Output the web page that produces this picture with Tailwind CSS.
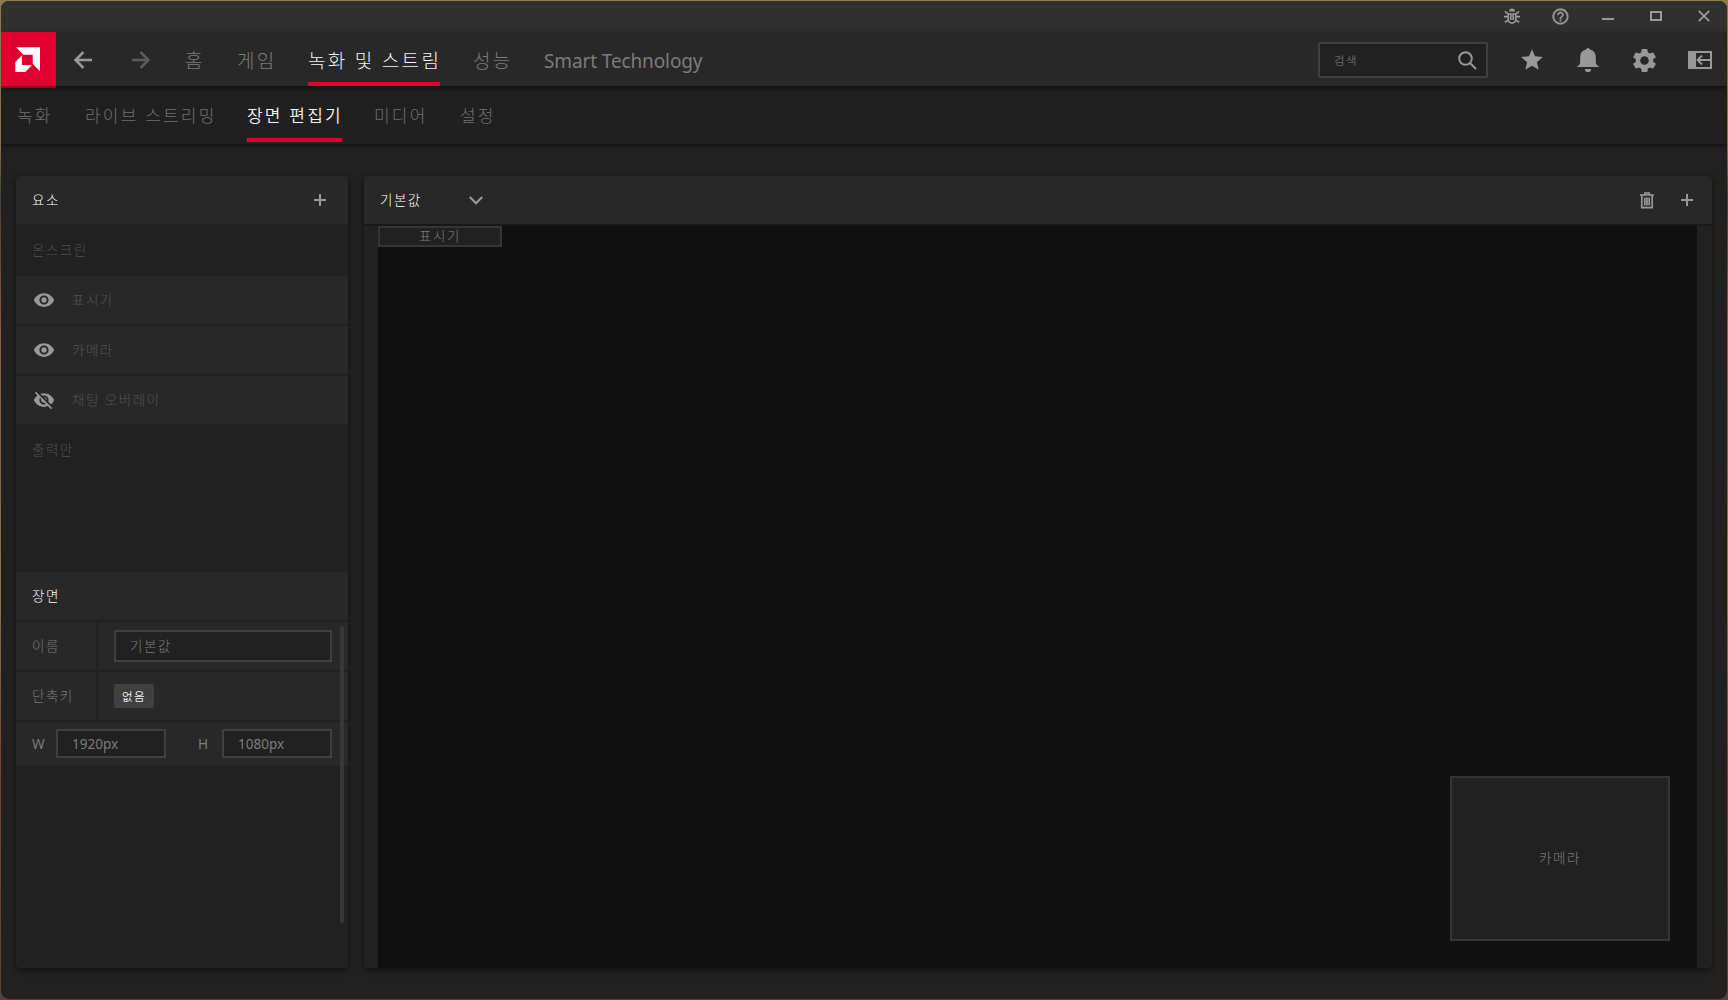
<!DOCTYPE html>
<html lang="ko">
<head>
<meta charset="utf-8">
<title>Scene editor</title>
<script src="https://cdn.jsdelivr.net/npm/@tailwindcss/browser@4"></script>
</head>
<body class="w-[1728px] h-[1000px] overflow-hidden p-px bg-[linear-gradient(180deg,#8f7a4e_0%,#7d7048_15%,#4a4038_20%,#8a5a40_32%,#80744a_60%,#7a4a36_75%,#5a4038_100%)] font-['Noto_Sans','Noto_Sans_CJK_KR',sans-serif]">
<div class="w-[1726px] h-[998px] rounded-lg overflow-hidden bg-[#212121] flex flex-col">

  <!-- title bar -->
  <div class="h-[31px] shrink-0 bg-[#303030] flex justify-end pb-px text-[#9a9a9a]">
    <div class="w-12 flex items-center justify-center"><svg width="16" height="16" viewBox="0 0 16 16" fill="none" stroke="currentColor" stroke-width="1.6"><path d="M4.2 6h7.6v5.2a3.8 3.8 0 0 1-7.6 0zM0 8.6h4M12 8.6h4M.8 3.4 4.2 6M15.2 3.4 11.8 6M.8 14.4 4.4 12M15.200 14.4 11.600 12M6.800 7v5M9.200 7v5"/><path d="M5 3.600a3 3 0 0 1 6 0z" fill="currentColor" stroke="none"/></svg></div>
    <div class="w-12 flex items-center justify-center"><svg width="19" height="19" viewBox="0 0 24 24" fill="currentColor" stroke="currentColor" stroke-width=".4"><path d="M11 18h2v-2h-2v2zm1-16C6.480 2 2 6.480 2 12s4.480 10 10 10 10-4.480 10-10S17.520 2 12 2zm0 18c-4.410 0-8-3.590-8-8s3.590-8 8-8 8 3.590 8 8-3.590 8-8 8zm0-14c-2.210 0-4 1.790-4 4h2c0-1.100.9-2 2-2s2 .9 2 2c0 2-3 1.750-3 5h2c0-2.250 3-2.500 3-5 0-2.210-1.790-4-4-4z"/></svg></div>
    <div class="w-12 flex items-center justify-center pt-[6px]"><div class="w-3 h-0.5 bg-[#9a9a9a]"></div></div>
    <div class="w-12 flex items-center justify-center"><div class="w-3 h-[10px] border-2 border-[#9a9a9a]"></div></div>
    <div class="w-[47px] flex items-center pl-[18px]"><svg width="12" height="12" viewBox="0 0 12 12" stroke="currentColor" stroke-width="1.800"><path d="M.8.8 11.200 11.200M11.200.8.8 11.200"/></svg></div>
  </div>

  <!-- main navigation -->
  <div class="h-[54px] shrink-0 bg-[#282828] flex relative z-20 shadow-[0_2px_5px_rgba(0,0,0,.6)] whitespace-nowrap">
    <div class="w-[55px] h-[56px] bg-[#e0002f] border-b-2 border-[#8a0a26]">
      <svg width="55" height="54" viewBox="0 0 55 54" fill="#fff"><path d="M15 15.300H39V39.300L31.700 31.700V22.700H22.300zM21 23.300 14.300 30V40H24.300L31 33H21z"/></svg>
    </div>
    <svg class="ml-[18px] mt-[19px]" width="18" height="18" viewBox="0 0 18 18" fill="none" stroke="#999" stroke-width="2.500"><path d="M18 9H1.500M9.500 1 1.500 9l8 8"/></svg>
    <svg class="ml-10 mt-[19px]" width="18" height="18" viewBox="0 0 18 18" fill="none" stroke="#5c5c5c" stroke-width="2.500"><path d="M0 9h16.500M8.500 1l8 8-8 8"/></svg>
    <div class="ml-[35px] flex gap-[33px] h-[54px] items-stretch text-[19px] leading-[58px] tracking-[2.300px] font-light text-[#7c7c7c]">
      <div class="w-[19px]">홈</div>
      <div class="w-[38px]">게임</div>
      <div class="w-[132px] border-b-4 border-[#e0002f] text-[#f4f4f4]">녹화 및 스트림</div>
      <div class="w-[38px]">성능</div>
      <div class="w-[160px] tracking-[-0.12px] font-normal">Smart Technology</div>
    </div>
    <div class="ml-auto mt-[10px] w-[170px] h-9 rounded-[2px] border-2 border-[#404040] bg-[#212121] flex items-center pl-[14px] pr-[9px] text-[#808080]">
      <span class="grow text-[11.500px] font-light tracking-[1.400px] pt-px">검색</span>
      <svg width="19" height="19" viewBox="0 0 19 19" fill="none" stroke="#999" stroke-width="2"><circle cx="7.500" cy="7.500" r="6.300"/><path d="M12 12l6 6"/></svg>
    </div>
    <div class="ml-4 flex items-center text-[#999]">
      <div class="w-14 flex justify-center pt-px"><svg width="26" height="26" viewBox="0 0 24 24" fill="currentColor"><path d="M12 17.270 18.180 21l-1.640-7.030L22 9.240l-7.190-.61L12 2 9.190 8.630 2 9.240l5.460 4.730L5.820 21z"/></svg></div>
      <div class="w-14 flex justify-center pt-0.5"><svg width="24" height="24" viewBox="0 0 24 24" fill="currentColor"><path d="M12 0a2 2 0 0 0-2 1.600C6.300 2.500 4.200 5.400 4.200 9v5.500C4.200 16.500 2.500 17.500.5 19h23c-2-1.500-3.700-2.500-3.700-4.500V9c0-3.600-2.100-6.500-5.800-7.400A2 2 0 0 0 12 0zM8.800 21a3.200 3.200 0 0 0 6.400 0z"/></svg></div>
      <div class="w-14 flex justify-center pt-0.5"><svg width="29" height="29" viewBox="0 0 24 24" fill="currentColor"><path d="M19.140 12.940c.04-.3.060-.61.060-.94 0-.32-.020-.640-.070-.940l2.030-1.580c.18-.140.230-.410.120-.610l-1.920-3.320c-.120-.220-.370-.290-.590-.220l-2.390.960c-.5-.380-1.030-.7-1.620-.940l-.360-2.540c-.040-.240-.240-.410-.480-.410h-3.840c-.240 0-.430.170-.470.410l-.36 2.540c-.590.240-1.130.570-1.620.940l-2.390-.960c-.220-.080-.470 0-.590.220L2.740 8.870c-.120.210-.080.470.120.610l2.030 1.580c-.050.300-.090.630-.090.940s.020.640.070.940l-2.030 1.580c-.180.140-.230.410-.120.610l1.920 3.320c.120.220.370.290.590.220l2.390-.960c.5.380 1.030.7 1.620.940l.36 2.540c.050.240.240.410.480.410h3.840c.240 0 .440-.170.470-.410l.36-2.540c.590-.240 1.130-.560 1.620-.940l2.390.960c.220.080.470 0 .590-.220l1.920-3.320c.120-.220.070-.470-.120-.610zM12 15.600c-1.980 0-3.600-1.620-3.600-3.600s1.620-3.600 3.600-3.600 3.600 1.620 3.600 3.600-1.620 3.600-3.600 3.600z"/></svg></div>
      <div class="w-[55px] pl-4 pt-0.5"><svg width="24" height="18" viewBox="0 0 24 18" fill="none" stroke="currentColor" stroke-width="2"><path d="M1 1h22v16H1z"/><path d="M0 0h8v18H0z" fill="currentColor" stroke="none"/><path d="M23 9H10M14 4.500 9.500 9l4.500 4.500" stroke-width="1.800"/></svg></div>
    </div>
  </div>

  <!-- section tabs -->
  <div class="h-[58px] shrink-0 bg-[#202020] relative z-10 shadow-[0_1px_4px_rgba(0,0,0,.7)] pl-4 pb-[2px] flex gap-8 text-[17px] leading-[60px] tracking-[2.200px] font-light text-[#707070] whitespace-nowrap">
    <div class="w-9">녹화</div>
    <div class="w-[130px]">라이브 스트리밍</div>
    <div class="w-[95px] border-b-4 border-[#e0002f] text-[#f4f4f4] font-[350]">장면 편집기</div>
    <div class="w-[54px]">미디어</div>
    <div class="w-9">설정</div>
  </div>

  <!-- workspace -->
  <div class="grow flex gap-4 px-[15px] pt-8 pb-[31px] text-[13.500px] tracking-[1.500px] font-light whitespace-nowrap">
    <div class="w-[332px] h-[792px] rounded bg-[#212121] shadow-[0_2px_6px_rgba(0,0,0,.55)] relative flex flex-col overflow-visible">
      <div class="h-12 shrink-0 rounded-t bg-[#282828] flex items-center justify-between pl-4 pr-[22px] text-[#fff]">
        <span class="pt-px">요소</span>
        <svg width="12" height="12" viewBox="0 0 12 12" stroke="#999" stroke-width="2"><path d="M6 0v12M0 6h12"/></svg>
      </div>
      <div class="h-[52px] shrink-0 flex items-center pl-4 text-[#525252]">온스크린</div>
      <div class="flex flex-col gap-0.5 text-[#525252]">
        <div class="h-12 bg-[#282828] flex items-center pl-[17px] gap-[17px]">
          <svg width="22" height="22" viewBox="0 0 24 24" fill="#999"><path d="M12 4.500C7 4.500 2.730 7.610 1 12c1.730 4.390 6 7.500 11 7.500s9.270-3.110 11-7.500c-1.730-4.390-6-7.500-11-7.500zM12 17c-2.760 0-5-2.240-5-5s2.240-5 5-5 5 2.240 5 5-2.240 5-5 5zm0-8c-1.660 0-3 1.340-3 3s1.340 3 3 3 3-1.340 3-3-1.340-3-3-3z"/></svg><span>표시기</span></div>
        <div class="h-12 bg-[#282828] flex items-center pl-[17px] gap-[17px]">
          <svg width="22" height="22" viewBox="0 0 24 24" fill="#999"><path d="M12 4.500C7 4.500 2.730 7.610 1 12c1.730 4.390 6 7.500 11 7.500s9.270-3.110 11-7.500c-1.730-4.390-6-7.500-11-7.500zM12 17c-2.760 0-5-2.240-5-5s2.240-5 5-5 5 2.240 5 5-2.240 5-5 5zm0-8c-1.660 0-3 1.340-3 3s1.340 3 3 3 3-1.340 3-3-1.340-3-3-3z"/></svg><span>카메라</span></div>
        <div class="h-12 bg-[#282828] flex items-center pl-[17px] gap-[17px]">
          <svg width="22" height="22" viewBox="0 0 24 24" fill="#999"><path d="M12 7c2.760 0 5 2.240 5 5 0 .65-.13 1.260-.36 1.830l2.920 2.920c1.510-1.260 2.700-2.890 3.430-4.750-1.730-4.390-6-7.500-11-7.500-1.400 0-2.740.25-3.980.7l2.160 2.160C10.740 7.130 11.350 7 12 7zM2 4.270l2.280 2.280.46.46C3.080 8.300 1.780 10.020 1 12c1.730 4.390 6 7.500 11 7.500 1.550 0 3.030-.3 4.380-.84l.42.42L19.730 22 21 20.730 3.270 3 2 4.270zM7.530 9.800l1.550 1.550c-.05.21-.08.43-.08.65 0 1.660 1.340 3 3 3 .22 0 .44-.03.65-.08l1.550 1.550c-.67.33-1.410.53-2.200.53-2.760 0-5-2.240-5-5 0-.79.2-1.530.53-2.200zm4.310-.78l3.150 3.150.020-.16c0-1.660-1.340-3-3-3l-.17.010z"/></svg><span>채팅 오버레이</span></div>
      </div>
      <div class="h-[52px] shrink-0 flex items-center pl-4 text-[#525252]">출력만</div>
      <div class="mt-24 flex flex-col gap-0.5 text-[#7c7c7c]">
        <div class="h-12 bg-[#282828] flex items-center pl-4 text-[#fff]">장면</div>
        <div class="h-12 flex gap-0.5">
          <div class="w-20 bg-[#282828] flex items-center pl-4 pt-px">이름</div>
          <div class="grow bg-[#282828] flex items-center px-4"><div class="w-full h-8 border-2 border-[#404040] bg-[#212121] flex items-center pl-[14px] pt-px">기본값</div></div>
        </div>
        <div class="h-12 flex gap-0.5">
          <div class="w-20 bg-[#282828] flex items-center pl-4 pt-px">단축키</div>
          <div class="grow bg-[#282828] flex items-center px-4"><div class="w-10 h-6 rounded-[2px] bg-[#404040] text-[#f4f4f4] text-[11.500px] tracking-[1.400px] font-[350] flex items-center pl-2 pt-px">없음</div></div>
        </div>
        <div class="h-[44px] bg-[#282828] flex items-center px-4 pb-px tracking-normal font-normal text-[13.500px]">
          <span class="w-6 pt-px">W</span>
          <div class="w-[110px] h-[29px] border-2 border-[#404040] bg-[#212121] flex items-center pl-[14px] pt-px">1920px</div>
          <span class="w-6 ml-8 pt-px">H</span>
          <div class="w-[110px] h-[29px] border-2 border-[#404040] bg-[#212121] flex items-center pl-[14px] pt-px">1080px</div>
        </div>
      </div>
      <div class="absolute right-1 top-[450px] w-1 h-[297px] rounded-sm bg-[#383838]"></div>
    </div>

    <div class="w-[1348px] h-[792px] rounded bg-[#212121] shadow-[0_2px_6px_rgba(0,0,0,.55)] flex flex-col">
      <div class="h-[50px] shrink-0 rounded-t bg-[#282828] border-b-2 border-[#191919] flex items-center pl-4 pr-[19px] text-[#fff]">
        <span class="w-[89px] pt-px">기본값</span>
        <svg width="14" height="9" viewBox="0 0 14 9" fill="none" stroke="#999" stroke-width="2.200"><path d="M.8 1 7 7.200 13.200 1"/></svg>
        <svg class="ml-auto" width="14" height="17" viewBox="0 0 14 17" fill="none" stroke="#999" stroke-width="1.700"><path d="M0 3h14M4.800 2.500V1h4.400v1.500M1.800 3v12.700h10.400V3M4.800 5.500v8M7 5.500v8M9.200 5.500v8"/></svg>
        <svg class="ml-[27px]" width="12" height="12" viewBox="0 0 12 12" stroke="#999" stroke-width="2"><path d="M6 0v12M0 6h12"/></svg>
      </div>
      <div class="grow ml-[14px] mr-[15px] bg-[#101010] relative text-[#7c7c7c]">
        <div class="absolute left-0 top-0 w-[124px] h-[21px] border-2 border-[#363636] bg-[#212121] flex items-center justify-center">표시기</div>
        <div class="absolute left-[1072px] top-[550px] w-[220px] h-[165px] border-2 border-[#363636] bg-[#212121] flex items-center justify-center">카메라</div>
      </div>
    </div>
  </div>
</div>
</body>
</html>
